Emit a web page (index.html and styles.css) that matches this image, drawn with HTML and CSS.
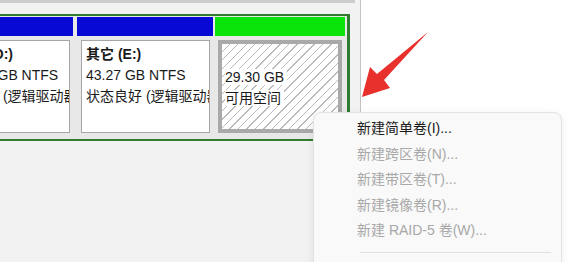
FILE: index.html
```html
<!DOCTYPE html>
<html lang="zh-CN">
<head>
    <meta charset="UTF-8">
    <title>磁盘管理</title>
    <link rel="stylesheet" href="styles.css">
</head>
<body>
    <div class="screen">
        <div class="console">
            <div class="prev-disk"></div>
            <div class="ext">
                <div class="part part-d">
                    <div class="part-head logical"></div>
                    <div class="part-body">
                        <div class="part-box">
                            <div class="name">新加卷 (D:)</div>
                            <div>1048.83 GB NTFS</div>
                            <div>状态良好 (逻辑驱动器)</div>
                        </div>
                    </div>
                </div>
                <div class="part part-e">
                    <div class="part-head logical"></div>
                    <div class="part-body">
                        <div class="part-box">
                            <div class="name">其它 (E:)</div>
                            <div>43.27 GB NTFS</div>
                            <div>状态良好 (逻辑驱动器)</div>
                        </div>
                    </div>
                </div>
                <div class="part part-free">
                    <div class="part-head free"></div>
                    <div class="part-body">
                        <div class="part-box hatched">
                            <div class="label"><span>29.30 GB</span></div>
                            <div class="label"><span>可用空间</span></div>
                        </div>
                    </div>
                </div>
            </div>
        </div>
        <div class="blank"></div>

        <!-- red pointer drawn on top of the screenshot -->
        <svg class="arrow" width="574" height="262" viewBox="0 0 574 262">
            <polygon points="428,32 384,80 390,88 362,97 370,67 377,74" fill="#e8302c"/>
        </svg>

        <div class="menu">
            <div class="item">新建简单卷(I)...</div>
            <div class="item disabled">新建跨区卷(N)...</div>
            <div class="item disabled">新建带区卷(T)...</div>
            <div class="item disabled">新建镜像卷(R)...</div>
            <div class="item disabled">新建 RAID-5 卷(W)...</div>
            <div class="sep"></div>
            <div class="item disabled">删除分区(D)...</div>
        </div>
    </div>
</body>
</html>
```

FILE: styles.css
```css
body {
    margin: 0;
    padding: 0;
    background-color: #fff;
    font-family: "Liberation Sans", "Noto Sans CJK SC", sans-serif;
    font-size: 14px;
    color: #1a1a1a;
}
.screen {
    position: relative;
    display: flex;
    width: 574px;
    height: 262px;
    overflow: hidden;
}
.console {
    flex: none;
    width: 360px;
    background-color: #f2f2f2;
    border-right: 1px solid #c4c4c4;
    overflow: hidden;
}
.blank {
    flex: 1;
    background-color: #fff;
}
.prev-disk {
    width: 355px;
    height: 3px;
    background-color: #cdcdcd;
}
.ext {
    display: flex;
    width: fit-content;
    margin-top: 11px;
    margin-left: -69px;
    padding: 1px 2px 4px 1px;
    border: 2px solid #2f7b2f;
    border-right-width: 3px;
    background-color: #e8e8e8;
}
.part {
    display: flex;
    flex-direction: column;
}
.part-d {
    width: 139px;
}
.part-e {
    width: 136px;
    margin-left: 4px;
}
.part-free {
    width: 130px;
    margin-left: 2px;
}
.part-head {
    height: 19px;
}
.part-head.logical {
    background-color: #0909d6;
}
.part-head.free {
    background-color: #0ae40a;
}
.part-body {
    margin-top: 2px;
    padding: 2px 3px 2px 4px;
}
.part-free .part-body {
    padding: 2px 3px 2px 3px;
}
.part-box {
    box-sizing: border-box;
    height: 93px;
    padding: 3px 4px;
    background-color: #fff;
    border: 1px solid #a6a6a6;
    line-height: 21px;
    white-space: nowrap;
    overflow: hidden;
}
.part-box .name {
    font-weight: bold;
}
.part-box.hatched {
    border: 4px solid #a9a9a9;
    padding: 23px 3px 0 3px;
    background: repeating-linear-gradient(135deg, #fff 0, #fff 5px, #bababa 5px, #bababa 6px);
}
.label span {
    background-color: #fff;
    padding-right: 3px;
}
.arrow {
    position: absolute;
    left: 0;
    top: 0;
    pointer-events: none;
}
.menu {
    position: absolute;
    left: 313px;
    top: 112px;
    width: 247px;
    height: 170px;
    padding-top: 3px;
    background-color: #f9f9f9;
    border: 1px solid #e2e2e2;
    border-radius: 8px;
    box-shadow: 0 2px 8px rgba(0, 0, 0, 0.08);
}
.item {
    height: 25.5px;
    line-height: 25.5px;
    padding-left: 43px;
    color: #1b1b1b;
}
.item.disabled {
    color: #a8a8a8;
}
.sep {
    height: 1px;
    margin: 8px 10px 8px 46px;
    background-color: #e0e0e0;
}
```
